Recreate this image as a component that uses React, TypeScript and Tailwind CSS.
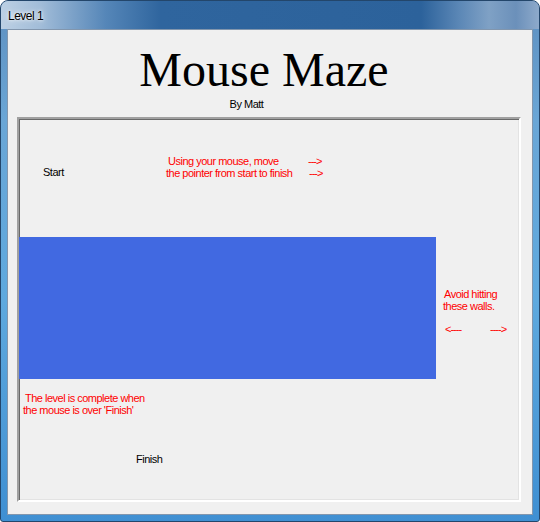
const ui = "font-['Liberation_Sans',Arial,sans-serif] text-[11px] leading-[12px] tracking-[-0.5px]";

function Arrow({ text }: { text: string }) {
  return <span className="tracking-[-1px]">{text}</span>;
}

export default function App() {
  return (
    <div className="h-[522px] w-[540px] overflow-hidden rounded-t-[8px] rounded-b-[3px] border border-[#23466b] bg-[linear-gradient(180deg,#5e8fbf_0px,#6aa6d6_120px,#5ea9de_300px,#3f8fd2_522px)]">
      {/* title bar */}
      <div className="h-[28px] bg-[linear-gradient(90deg,#bcd0e4_0px,#a1bcd8_40px,#5586b8_105px,#2f659e_160px,#2c629b_420px,#5b87b6_458px,#7fa1c5_488px,#6b90ba_515px,#8eaacb_538px)] pl-[7px] pt-[8px] font-['Liberation_Sans',Arial,sans-serif] text-[12px] leading-[14px] tracking-[-0.5px] text-black [text-shadow:0_0_6px_#ffffff,0_0_3px_#ffffff]">
        Level 1
      </div>

      {/* client area */}
      <div className="mx-[6px] h-[486px] border border-[#8296ad] bg-[#f0f0f0]">
        <div className="mt-[16px] pr-[12px] text-center font-['Liberation_Serif','Times_New_Roman',serif] text-[48px] leading-[48px] text-black">
          Mouse Maze
        </div>
        <div className={`${ui} mt-[4px] pr-[47px] text-center leading-[13px] text-black`}>By Matt</div>

        {/* maze panel */}
        <div className="ml-[9px] mt-[6px] h-[385px] w-[504px] border-2 border-t-[#a0a0a0] border-l-[#a0a0a0] border-r-white border-b-white shadow-[inset_1px_1px_0_#696969,inset_-1px_-1px_0_#e3e3e3]">
          {/* top section */}
          <div className={`${ui} flex h-[118px]`}>
            <div className="w-[147px] pl-[24px] pt-[47px] leading-[13px] text-black">Start</div>
            <div className="flex flex-col pt-[36px] text-[#ff0000]">
              <div className="flex">
                <span className="w-[142px] pl-[2px]">Using your mouse, move</span>
                <Arrow text="--->" />
              </div>
              <div className="flex">
                <span className="w-[143px]">the pointer from start to finish</span>
                <Arrow text="--->" />
              </div>
            </div>
          </div>

          {/* wall row */}
          <div className={`${ui} flex h-[142px]`}>
            <div className="h-[142px] w-[417px] bg-[#4169e1]" />
            <div className="flex flex-col pl-[7px] pt-[51px] text-[#ff0000]">
              <span className="pl-[1px]">Avoid hitting</span>
              <span>these walls.</span>
              <div className="mt-[11px] flex pl-[2px]">
                <span className="w-[45px]">
                  <Arrow text="<----" />
                </span>
                <Arrow text="---->" />
              </div>
            </div>
          </div>

          {/* bottom section */}
          <div className={`${ui} flex h-[121px] flex-col pt-[13px]`}>
            <span className="pl-[6px] text-[#ff0000]">The level is complete when</span>
            <span className="pl-[4px] text-[#ff0000]">the mouse is over 'Finish'</span>
            <span className="mt-[37px] pl-[117px] text-black">Finish</span>
          </div>
        </div>
      </div>
    </div>
  );
}
